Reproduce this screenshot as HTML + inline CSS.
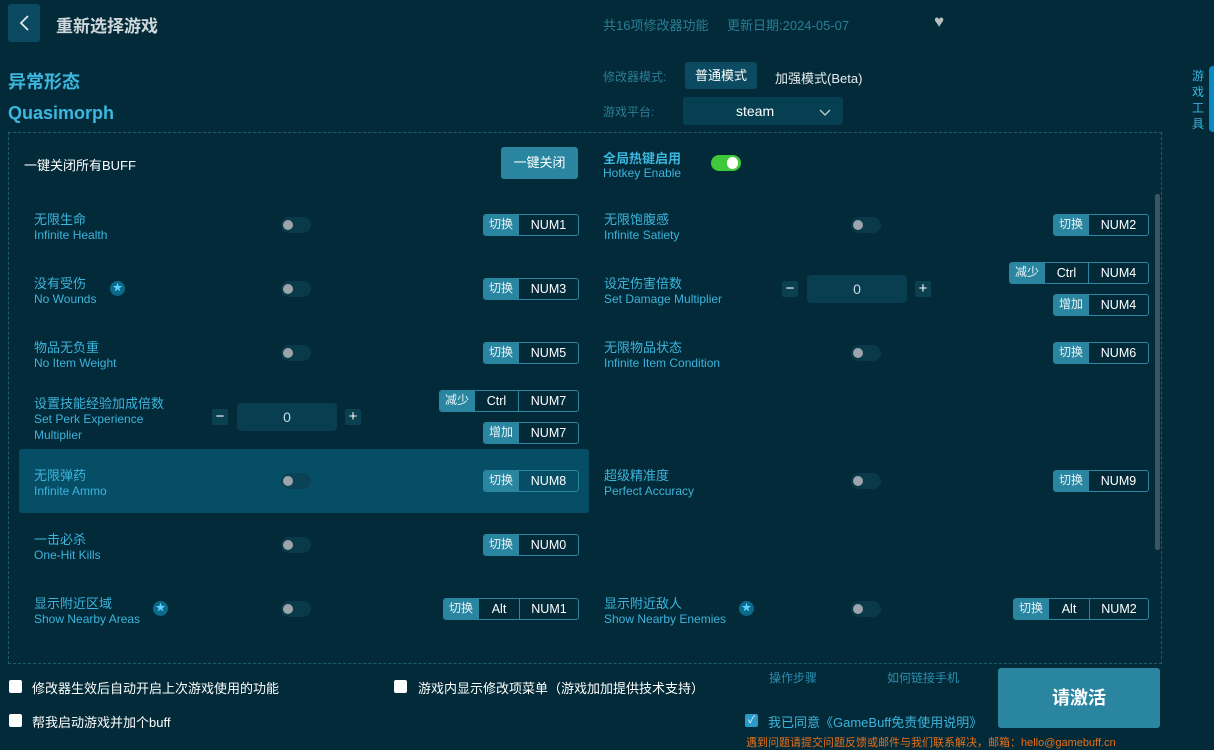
<!DOCTYPE html><html><head><meta charset="utf-8"><style>
*{margin:0;padding:0;box-sizing:border-box}
body{width:1214px;height:749px;background:#022a38;font-family:"Liberation Sans","Noto Sans CJK SC",sans-serif;position:relative;overflow:hidden;color:#fff}
.a{position:absolute;white-space:nowrap}
.cn{font-size:13px;color:#3cb4dc}
.en{font-size:12px;color:#3cb4dc}
.tg{position:absolute;width:30px;height:16px;border-radius:8px;background:#0a3a4a}
.tg::after{content:"";position:absolute;left:2px;top:3px;width:10px;height:10px;border-radius:5px;background:#9aa4aa}
.key{position:absolute;height:22px;display:flex;border:1px solid #2a86a0;border-radius:3px;font-size:12.5px;overflow:hidden}
.key span{display:flex;align-items:center;justify-content:center;height:100%}
.key .l{background:#2a86a0;color:#e8f4f8;font-size:12px;padding-bottom:3px}
.key .k{border-left:1px solid #2a86a0;color:#fff}
.star{position:absolute;width:15px;height:15px;border-radius:8px;background:#0b6a8a;color:#5cd0ff;font-size:10px;line-height:15px;text-align:center}
.pm{position:absolute;width:16px;height:16px;background:#0b4050;border-radius:2px;color:#fff;font-size:15px;line-height:15px;text-align:center}
.num{position:absolute;width:100px;height:28px;background:#083e50;border-radius:4px;color:#c8dde4;font-size:14px;line-height:28px;text-align:center}
.cb{position:absolute;width:13px;height:13px;background:#fff;border-radius:2px}
</style></head><body>
<div class="a" style="left:8px;top:4px;width:32px;height:38px;background:#0b4a60;border-radius:3px"><svg width="32" height="38"><path d="M20 12 L13 19 L20 26" stroke="#e0e8ec" stroke-width="1.8" fill="none"/></svg></div>
<div class="a" style="left:56px;top:12px;font-size:17px;font-weight:bold;color:#d0d8dc">重新选择游戏</div>
<div class="a" style="left:603px;top:15px;font-size:13px;color:#2a7e96">共16项修改器功能</div>
<div class="a" style="left:727px;top:15px;font-size:13px;color:#2a7e96;left:727px">更新日期:2024-05-07</div>
<div class="a" style="left:934px;top:12px;font-size:17px;color:#b8c0c4">♥</div>
<div class="a" style="left:8px;top:68px;font-size:18px;font-weight:bold;color:#3cb8e0">异常形态</div>
<div class="a" style="left:8px;top:103px;font-size:18px;font-weight:bold;color:#3cb8e0">Quasimorph</div>
<div class="a" style="left:603px;top:68px;font-size:12px;color:#2a7e96">修改器模式:</div>
<div class="a" style="left:685px;top:62px;width:72px;height:27px;background:#0b4a60;border-radius:3px;font-size:13px;line-height:27px;text-align:center">普通模式</div>
<div class="a" style="left:775px;top:68px;font-size:13px;color:#e8eef0">加强模式(Beta)</div>
<div class="a" style="left:603px;top:103px;font-size:12px;color:#2a7e96">游戏平台:</div>
<div class="a" style="left:683px;top:97px;width:160px;height:28px;background:#063e52;border-radius:3px;font-size:14px;line-height:28px;padding-left:53px">steam<svg style="position:absolute;left:136px;top:12px" width="12" height="8"><path d="M1 1 L6 6 L11 1" stroke="#c8d0d4" stroke-width="1.3" fill="none"/></svg></div>
<div class="a" style="left:1192px;top:68px;font-size:12px;color:#3cb4dc;width:14px;line-height:16px;white-space:normal">游戏工具</div>
<div class="a" style="left:1209px;top:66px;width:5px;height:66px;background:#0a8ac0;border-radius:4px 0 0 4px"></div>
<div class="a" style="left:8px;top:132px;width:1154px;height:532px;border:1px dashed #1d5c72"></div>
<div class="a" style="left:1155px;top:194px;width:5px;height:356px;background:#3a5560;border-radius:2px"></div>
<div class="a" style="left:24px;top:155px;font-size:13px;color:#fff">一键关闭所有BUFF</div>
<div class="a" style="left:501px;top:147px;width:77px;height:32px;background:#2a86a0;border-radius:3px;font-size:13px;line-height:32px;text-align:center">一键关闭</div>
<div class="a" style="left:603px;top:148px;font-size:13px;font-weight:bold;color:#3cb8e0">全局热键启用</div>
<div class="a" style="left:603px;top:166px;font-size:12px;color:#3cb4dc">Hotkey Enable</div>
<div class="a" style="left:711px;top:155px;width:30px;height:16px;border-radius:8px;background:#3ec83a"><div style="position:absolute;right:3px;top:2px;width:11px;height:12px;border-radius:6px;background:#fff"></div></div>
<div class="a" style="left:19px;top:449px;width:570px;height:64px;background:#064e66;border-radius:3px"></div>

<div class="a cn" style="left:34px;top:209px">无限生命</div><div class="a en" style="left:34px;top:228px">Infinite Health</div>
<div class="tg" style="left:281px;top:217px"></div>
<div class="key" style="left:483px;top:214px;width:96px"><span class="l" style="width:34px">切换</span><span class="k" style="flex:1">NUM1</span></div>

<div class="a cn" style="left:34px;top:273px">没有受伤</div><div class="a en" style="left:34px;top:292px">No Wounds</div>
<div class="star" style="left:110px;top:281px">★</div>
<div class="tg" style="left:281px;top:281px"></div>
<div class="key" style="left:483px;top:278px;width:96px"><span class="l" style="width:34px">切换</span><span class="k" style="flex:1">NUM3</span></div>

<div class="a cn" style="left:34px;top:337px">物品无负重</div><div class="a en" style="left:34px;top:356px">No Item Weight</div>
<div class="tg" style="left:281px;top:345px"></div>
<div class="key" style="left:483px;top:342px;width:96px"><span class="l" style="width:34px">切换</span><span class="k" style="flex:1">NUM5</span></div>

<div class="a cn" style="left:34px;top:393px">设置技能经验加成倍数</div><div class="a en" style="left:34px;top:412px">Set Perk Experience</div><div class="a en" style="left:34px;top:428px">Multiplier</div>
<div class="pm" style="left:212px;top:409px">−</div>
<div class="num" style="left:237px;top:403px">0</div>
<div class="pm" style="left:345px;top:409px">+</div>
<div class="key" style="left:439px;top:390px;width:140px"><span class="l" style="width:34px">减少</span><span class="k" style="width:44px">Ctrl</span><span class="k" style="flex:1">NUM7</span></div>
<div class="key" style="left:483px;top:422px;width:96px"><span class="l" style="width:34px">增加</span><span class="k" style="flex:1">NUM7</span></div>

<div class="a cn" style="left:34px;top:465px">无限弹药</div><div class="a en" style="left:34px;top:484px">Infinite Ammo</div>
<div class="tg" style="left:281px;top:473px;background:#0a4256"></div>
<div class="key" style="left:483px;top:470px;width:96px"><span class="l" style="width:34px">切换</span><span class="k" style="flex:1">NUM8</span></div>

<div class="a cn" style="left:34px;top:529px">一击必杀</div><div class="a en" style="left:34px;top:548px">One-Hit Kills</div>
<div class="tg" style="left:281px;top:537px"></div>
<div class="key" style="left:483px;top:534px;width:96px"><span class="l" style="width:34px">切换</span><span class="k" style="flex:1">NUM0</span></div>

<div class="a cn" style="left:34px;top:593px">显示附近区域</div><div class="a en" style="left:34px;top:612px">Show Nearby Areas</div>
<div class="star" style="left:153px;top:601px">★</div>
<div class="tg" style="left:281px;top:601px"></div>
<div class="key" style="left:443px;top:598px;width:136px"><span class="l" style="width:34px">切换</span><span class="k" style="width:41px">Alt</span><span class="k" style="flex:1">NUM1</span></div>

<div class="a cn" style="left:604px;top:209px">无限饱腹感</div><div class="a en" style="left:604px;top:228px">Infinite Satiety</div>
<div class="tg" style="left:851px;top:217px"></div>
<div class="key" style="left:1053px;top:214px;width:96px"><span class="l" style="width:34px">切换</span><span class="k" style="flex:1">NUM2</span></div>

<div class="a cn" style="left:604px;top:273px">设定伤害倍数</div><div class="a en" style="left:604px;top:292px">Set Damage Multiplier</div>
<div class="pm" style="left:782px;top:281px">−</div>
<div class="num" style="left:807px;top:275px">0</div>
<div class="pm" style="left:915px;top:281px">+</div>
<div class="key" style="left:1009px;top:262px;width:140px"><span class="l" style="width:34px">减少</span><span class="k" style="width:44px">Ctrl</span><span class="k" style="flex:1">NUM4</span></div>
<div class="key" style="left:1053px;top:294px;width:96px"><span class="l" style="width:34px">增加</span><span class="k" style="flex:1">NUM4</span></div>

<div class="a cn" style="left:604px;top:337px">无限物品状态</div><div class="a en" style="left:604px;top:356px">Infinite Item Condition</div>
<div class="tg" style="left:851px;top:345px"></div>
<div class="key" style="left:1053px;top:342px;width:96px"><span class="l" style="width:34px">切换</span><span class="k" style="flex:1">NUM6</span></div>

<div class="a cn" style="left:604px;top:465px">超级精准度</div><div class="a en" style="left:604px;top:484px">Perfect Accuracy</div>
<div class="tg" style="left:851px;top:473px"></div>
<div class="key" style="left:1053px;top:470px;width:96px"><span class="l" style="width:34px">切换</span><span class="k" style="flex:1">NUM9</span></div>

<div class="a cn" style="left:604px;top:593px">显示附近敌人</div><div class="a en" style="left:604px;top:612px">Show Nearby Enemies</div>
<div class="star" style="left:739px;top:601px">★</div>
<div class="tg" style="left:851px;top:601px"></div>
<div class="key" style="left:1013px;top:598px;width:136px"><span class="l" style="width:34px">切换</span><span class="k" style="width:41px">Alt</span><span class="k" style="flex:1">NUM2</span></div>

<div class="cb" style="left:9px;top:680px"></div><div class="a" style="left:32px;top:678px;font-size:13px">修改器生效后自动开启上次游戏使用的功能</div>
<div class="cb" style="left:394px;top:680px"></div><div class="a" style="left:418px;top:678px;font-size:13px">游戏内显示修改项菜单（游戏加加提供技术支持）</div>
<div class="cb" style="left:9px;top:714px"></div><div class="a" style="left:32px;top:712px;font-size:13px">帮我启动游戏并加个buff</div>
<div class="a" style="left:769px;top:669px;font-size:12px;color:#2a8eb0">操作步骤</div>
<div class="a" style="left:887px;top:669px;font-size:12px;color:#2a8eb0">如何链接手机</div>
<div class="a" style="left:998px;top:668px;width:162px;height:60px;background:#2a86a0;border-radius:3px;font-size:18px;font-weight:bold;line-height:60px;text-align:center">请激活</div>
<div class="a" style="left:745px;top:714px;width:13px;height:13px;background:#2a9ac8;border-radius:2px;font-size:10px;line-height:13px;text-align:center">✓</div>
<div class="a" style="left:768px;top:712px;font-size:13px;color:#3cb4dc">我已同意《GameBuff免责使用说明》</div>
<div class="a" style="left:746px;top:734px;font-size:11px;color:#e8701a">遇到问题请提交问题反馈或邮件与我们联系解决，邮箱：hello@gamebuff.cn</div>
</body></html>
